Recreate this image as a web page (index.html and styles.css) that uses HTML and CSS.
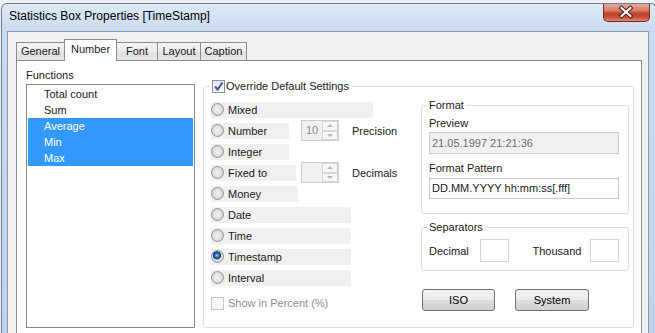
FILE: index.html
```html
<!DOCTYPE html>
<html lang="en">
<head>
  <meta charset="UTF-8" />
  <title>Statistics Box Properties [TimeStamp]</title>
  <link rel="stylesheet" href="styles.css">
</head>
<body>
<div class="window">
  <div class="titlebar">
    <span class="title">Statistics Box Properties [TimeStamp]</span>
    <div class="close">
      <svg width="45" height="17" viewBox="0 0 45 17">
        <path d="M17.5 5 L26.5 13 M26.5 5 L17.5 13" stroke="#5a2620" stroke-width="4.2" stroke-linecap="square" fill="none"/>
        <path d="M17.5 5 L26.5 13 M26.5 5 L17.5 13" stroke="#fff" stroke-width="2" stroke-linecap="square" fill="none"/>
      </svg>
    </div>
  </div>

  <div class="client">
    <div class="tabs">
      <div class="tab tab-general">General</div>
      <div class="tab tab-number active">Number</div>
      <div class="tab tab-font">Font</div>
      <div class="tab tab-layout">Layout</div>
      <div class="tab tab-caption">Caption</div>
    </div>

    <div class="panel">
      <div class="functions">
        <div class="caption">Functions</div>
        <ul class="listbox">
          <li>Total count</li>
          <li>Sum</li>
          <li class="sel">Average</li>
          <li class="sel">Min</li>
          <li class="sel">Max</li>
        </ul>
      </div>

      <fieldset class="group main">
        <legend>
          <span class="check on">
            <svg width="11" height="11" viewBox="0 0 11 11"><path d="M2 5.5 L4.5 8.5 L9.5 1.5" stroke="#4257a8" stroke-width="2" fill="none"/></svg>
          </span>
          Override Default Settings
        </legend>
        <div class="cols">
          <div class="options">
            <div class="row"><label class="opt w-mixed"><span class="radio"></span>Mixed</label></div>
            <div class="row">
              <label class="opt w-number"><span class="radio"></span>Number</label>
              <div class="spin"><span class="val">10</span><span class="arrows"><i class="up"></i><i class="down"></i></span></div>
              <span>Precision</span>
            </div>
            <div class="row"><label class="opt w-number"><span class="radio"></span>Integer</label></div>
            <div class="row">
              <label class="opt w-fixed"><span class="radio"></span>Fixed to</label>
              <div class="spin"><span class="val"></span><span class="arrows"><i class="up"></i><i class="down"></i></span></div>
              <span>Decimals</span>
            </div>
            <div class="row"><label class="opt w-money"><span class="radio"></span>Money</label></div>
            <div class="row"><label class="opt w-wide"><span class="radio"></span>Date</label></div>
            <div class="row"><label class="opt w-wide"><span class="radio"></span>Time</label></div>
            <div class="row"><label class="opt w-wide"><span class="radio on"></span>Timestamp</label></div>
            <div class="row"><label class="opt w-wide"><span class="radio"></span>Interval</label></div>
            <div class="percent"><span class="check off"></span>Show in Percent (%)</div>
          </div>

          <div class="format-col">
            <fieldset class="group format">
              <legend>Format</legend>
              <div class="caption preview-label">Preview</div>
              <div class="field readonly">21.05.1997 21:21:36</div>
              <div class="caption pattern-label">Format Pattern</div>
              <div class="field pattern">DD.MM.YYYY hh:mm:ss[.fff]</div>
            </fieldset>

            <fieldset class="group seps">
              <legend>Separators</legend>
              <div class="sep-row">
                <span class="sep-decimal">Decimal</span>
                <span class="box"></span>
                <span class="sep-thousand">Thousand</span>
                <span class="box"></span>
              </div>
            </fieldset>

            <div class="buttons">
              <button class="btn btn-iso">ISO</button>
              <button class="btn btn-system">System</button>
            </div>
          </div>
        </div>
      </fieldset>
    </div>
  </div>
</div>
</body>
</html>
```

FILE: styles.css
```css
body {
  margin: 0;
  width: 655px;
  height: 333px;
  overflow: hidden;
  background: #eef1f4;
  font-family: "Liberation Sans", Arial, sans-serif;
  font-size: 11px;
  color: #1a1a1a;
}
.window {
  margin: 3px 0 0 1px;
  width: 656px;
  height: 330px;
  box-sizing: border-box;
  border: 1px solid #6b7d92;
  border-bottom: none;
  border-radius: 6px 6px 0 0;
  background: linear-gradient(to bottom, #dde9f6 0, #c8dbf0 28px, #bcd3eb 100%);
  padding: 0 7px 0 5px;
  overflow: hidden;
}
.titlebar {
  height: 27px;
  display: flex;
  justify-content: space-between;
  align-items: flex-start;
}
.title {
  font-size: 12px;
  line-height: 15px;
  padding-top: 5px;
  margin-left: 2px;
  color: #000;
}
.close {
  width: 47px;
  height: 19px;
  box-sizing: border-box;
  margin: -1px -1px 0 0;
  border: 1px solid #6e2d26;
  border-top: none;
  border-radius: 0 0 5px 5px;
  background: linear-gradient(to bottom, #e9ada2 0%, #d8806f 40%, #c3402c 58%, #c94e3a 78%, #de8670 100%);
}
.close svg {
  display: block;
}
.client {
  height: 320px;
  box-sizing: border-box;
  border: 1px solid #8d9aab;
  background: #f0f0f0;
  padding: 7px 6px 0 8px;
}

/* tabs */
.tabs {
  display: flex;
  align-items: flex-end;
  height: 21px;
}
.tab {
  height: 18px;
  box-sizing: border-box;
  border: 1px solid #898c95;
  border-bottom: none;
  margin-right: -1px;
  background: linear-gradient(to bottom, #f4f4f4 0, #ececec 50%, #dfdfdf 51%, #e6e6e6 100%);
  text-align: center;
  line-height: 17px;
}
.tab.active {
  height: 22px;
  margin-bottom: -1px;
  background: #fff;
  line-height: 19px;
  position: relative;
  z-index: 1;
}
.tab-general { width: 49px; }
.tab-number { width: 53px; }
.tab-font { width: 42px; }
.tab-layout { width: 44px; }
.tab-caption { width: 47px; }

.panel {
  height: 300px;
  border: 1px solid #898c95;
  background: #fff;
  display: flex;
  align-items: flex-start;
}
.caption {
  line-height: 14px;
}

/* functions list */
.functions {
  padding: 7px 0 0 9px;
}
.listbox {
  list-style: none;
  margin: 2px 0 0;
  padding: 1px;
  width: 169px;
  height: 244px;
  box-sizing: border-box;
  border: 1px solid #828790;
}
.listbox li {
  height: 16px;
  line-height: 16px;
  padding-left: 16px;
}
.listbox li.sel {
  background: #3399ff;
  color: #fff;
}

/* group boxes */
.group {
  min-width: 0;
  margin: 0;
  border: 1px solid #d5dfe5;
  border-radius: 3px;
}
.group legend {
  padding: 0 2px;
  line-height: 14px;
}
.main {
  margin: 18px 0 0 8px;
  width: 431px;
  height: 249px;
  box-sizing: border-box;
  padding: 6px 3px 0 6px;
}
.main legend {
  display: flex;
  align-items: center;
  gap: 1px;
}
.check {
  width: 13px;
  height: 13px;
  box-sizing: border-box;
  display: inline-block;
}
.check.on {
  border: 1px solid #8f8f8f;
  background: linear-gradient(to bottom, #e6e6e6, #fdfdfd);
}
.check.on svg {
  display: block;
}
.check.off {
  border: 1px solid #c6c6c6;
  background: #f7f7f7;
}
.cols {
  display: flex;
}
.options {
  width: 211px;
}
.row {
  display: grid;
  grid-template-columns: 77px 38px auto;
  column-gap: 13px;
  align-items: center;
  height: 21px;
  margin-left: 1px;
}
.opt {
  display: flex;
  align-items: center;
  gap: 4px;
  height: 16px;
  background: #f0f0f0;
}
.w-mixed { width: 162px; }
.w-number { width: 78px; }
.w-fixed { width: 85px; }
.w-money { width: 87px; }
.w-wide { width: 140px; }
.radio {
  width: 13px;
  height: 13px;
  box-sizing: border-box;
  border-radius: 50%;
  border: 1px solid #939393;
  background: radial-gradient(circle at 50% 50%, #f2f2f2 0, #e3e3e3 45%, #d2d2d2 75%, #f4f4f4 100%);
  flex: none;
}
.radio.on {
  background:
    radial-gradient(circle at 45% 40%, #a6dcff 0, #3a8fdc 1.5px, #174f95 3px, #0d3466 3.8px, transparent 4.3px),
    radial-gradient(circle at 50% 50%, #f2f2f2 0, #e3e3e3 45%, #d2d2d2 75%, #f4f4f4 100%);
}
.spin {
  display: flex;
  width: 38px;
  height: 21px;
  box-sizing: border-box;
  border: 1px solid #cdcdcd;
  background: #f0f0f0;
}
.spin .val {
  flex: 1;
  padding-left: 4px;
  line-height: 19px;
  color: #8a8a8a;
}
.spin .arrows {
  width: 16px;
  display: flex;
  flex-direction: column;
}
.spin i {
  flex: 1;
  border: 1px solid #d6d6d6;
  background: #f6f6f6;
  display: flex;
  align-items: center;
  justify-content: center;
}
.spin i::after {
  content: "";
  border-left: 3px solid transparent;
  border-right: 3px solid transparent;
}
.spin i.up::after {
  border-bottom: 3px solid #b4b4b4;
}
.spin i.down::after {
  border-top: 3px solid #b4b4b4;
}
.percent {
  margin: 7px 0 0 1px;
  height: 16px;
  display: flex;
  align-items: center;
  gap: 4px;
  color: #8d8d8d;
}

/* format column */
.format-col {
  width: 208px;
}
.format {
  margin-top: -1px;
  padding: 0 9px 14px 7px;
}
.format legend,
.seps legend {
  margin-left: -2px;
}
.preview-label {
  margin-top: 4px;
}
.pattern-label {
  margin-top: 7px;
}
.field {
  box-sizing: border-box;
  border: 1px solid #c9c9c9;
  padding-left: 2px;
}
.field.readonly {
  margin-top: 2px;
  height: 22px;
  line-height: 20px;
  background: #f0f0f0;
  color: #6d6d6d;
}
.field.pattern {
  margin-top: 3px;
  height: 21px;
  line-height: 19px;
  background: #fff;
  border-color: #c3c6ca;
}
.seps {
  margin-top: 6px;
  padding: 0 9px 8px 7px;
}
.sep-row {
  margin-top: 5px;
  display: flex;
  align-items: center;
}
.sep-decimal { width: 51px; }
.sep-thousand { width: 58px; margin-left: 24px; }
.box {
  width: 29px;
  height: 23px;
  box-sizing: border-box;
  border: 1px solid #d3d6da;
  background: #fff;
}
.buttons {
  margin: 18px 0 0 1px;
  display: flex;
  gap: 20px;
}
.btn {
  height: 22px;
  box-sizing: border-box;
  border: 1px solid #707070;
  border-radius: 3px;
  background: linear-gradient(to bottom, #f3f3f3 0, #ebebeb 48%, #dddddd 52%, #cfcfcf 100%);
  font-family: inherit;
  font-size: 11px;
  color: #000;
  padding: 0;
}
.btn-iso { width: 73px; }
.btn-system { width: 74px; }
```
